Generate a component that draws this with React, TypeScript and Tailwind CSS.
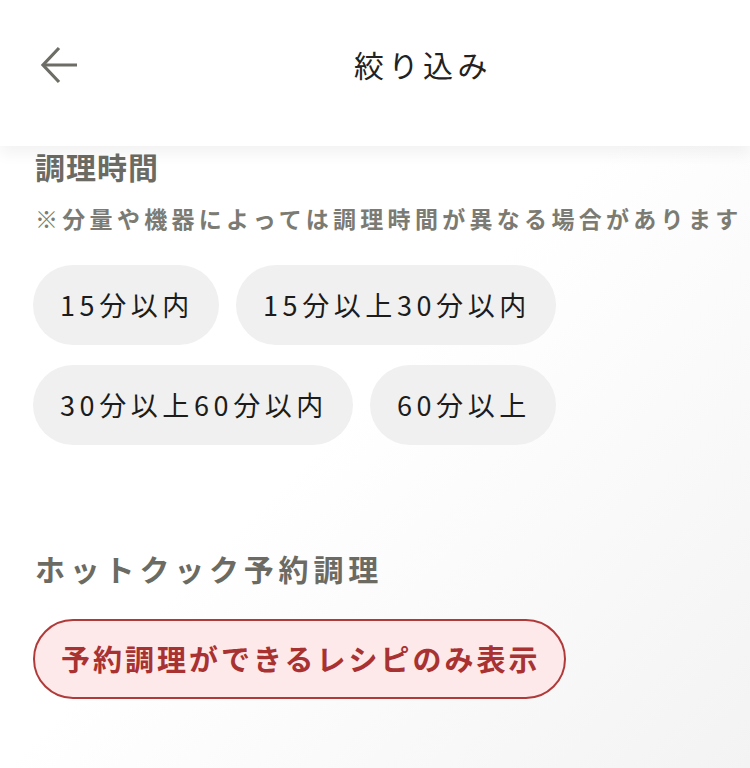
const jp = { fontFamily: '"Noto Sans CJK JP", "Noto Sans", sans-serif' };

const times = ["15分以内", "15分以上30分以内", "30分以上60分以内", "60分以上"];

function BackArrow() {
  return (
    <svg viewBox="0 0 40 40" className="h-[40px] w-[40px]" fill="none" stroke="#6d6d66" strokeWidth="3.2">
      <path d="M37 20H4" />
      <path d="M19 3L3 20l16 17" />
    </svg>
  );
}

function Chip({ label }: { label: string }) {
  return (
    <button className="flex h-[80px] items-center rounded-full bg-[#f0f0f0] pl-[27px] pr-[25px] text-[27px] tracking-[4.6px] text-[#1c1c1c]">
      {label}
    </button>
  );
}

export default function App() {
  return (
    <div
      style={jp}
      className="min-h-[768px] w-[750px] overflow-hidden bg-linear-to-br from-white via-white to-[#f3f3f3]"
    >
      <header className="relative z-10 flex h-[146px] items-start bg-white pl-[40px] pt-[45px] shadow-[0_8px_14px_rgba(0,0,0,0.05)]">
        <BackArrow />
        <h1 className="ml-[274px] mt-[-3px] text-[30px] tracking-[4.5px] text-[#222]">絞り込み</h1>
      </header>

      <main className="pl-[35px]">
        <section>
          <h2 className="pt-[2px] text-[30px] leading-[36px] font-bold tracking-[1px] text-[#6b6b63]">調理時間</h2>
          <p className="mt-[16px] whitespace-nowrap text-[23px] leading-[36px] font-bold tracking-[4.3px] text-[#7b7b73]">
            ※分量や機器によっては調理時間が異なる場合があります
          </p>
          <div className="ml-[-2px] mt-[29px] flex w-[560px] flex-wrap gap-x-[17px] gap-y-[20px]">
            {times.map((t) => (
              <Chip key={t} label={t} />
            ))}
          </div>
        </section>

        <section className="mt-[104px]">
          <h2 className="text-[30px] leading-[38px] font-bold tracking-[4.8px] text-[#6b6b63]">ホットクック予約調理</h2>
          <button className="ml-[-2px] mt-[32px] flex h-[80px] items-center rounded-full border-[2.5px] border-[#b03a3a] bg-[#fde8ea] pl-[26px] pr-[24px] text-[29px] font-bold tracking-[3px] text-[#a83232]">
            予約調理ができるレシピのみ表示
          </button>
        </section>
      </main>
    </div>
  );
}
